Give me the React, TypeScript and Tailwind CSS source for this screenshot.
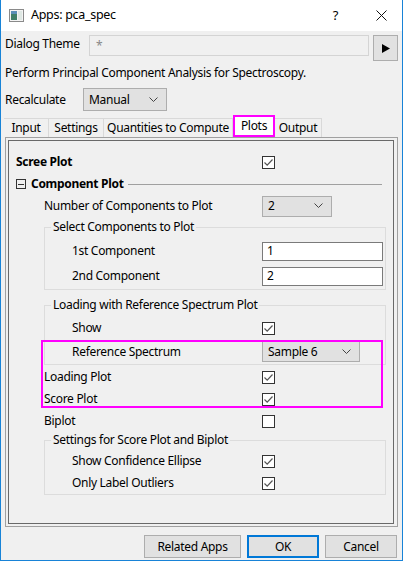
import React from 'react';

const Check: React.FC<{ checked?: boolean }> = ({ checked }) => (
  <span className="flex h-[13px] w-[13px] items-center justify-center border border-[#333] bg-white">
    {checked && (
      <svg width="11" height="11" viewBox="0 0 11 11">
        <path d="M1.5 5.5 L4.2 8.2 L9.5 2.5" fill="none" stroke="#555" strokeWidth="1.2" />
      </svg>
    )}
  </span>
);

const Chevron: React.FC = () => (
  <svg width="9" height="6" viewBox="0 0 9 6">
    <path d="M0.5 0.5 L4.5 4.5 L8.5 0.5" fill="none" stroke="#444" strokeWidth="1" />
  </svg>
);

const Select: React.FC<{ value: string; className: string }> = ({ value, className }) => (
  <div className={`flex items-center justify-between border border-[#adadad] bg-[#e1e1e1] pl-[5px] pr-[8px] ${className}`}>
    <span>{value}</span>
    <Chevron />
  </div>
);

const TextBox: React.FC<{ value: string }> = ({ value }) => (
  <div className="flex h-[19px] w-[121px] items-center border border-[#7a7a7a] bg-white pl-[4px]">{value}</div>
);

// label column ends where controls start (x = 262)
const Row: React.FC<{ label: string; labelClass: string; h?: string; children?: React.ReactNode }> = ({
  label,
  labelClass,
  h = 'h-[22px]',
  children,
}) => (
  <div className={`flex items-center ${h}`}>
    <div className={labelClass}>{label}</div>
    <div className="flex items-center">{children}</div>
  </div>
);

const Group: React.FC<{ title: string; className: string; children: React.ReactNode }> = ({ title, className, children }) => (
  <fieldset className={`ml-[35px] mr-[7px] border border-[#dcdcdc] ${className}`}>
    <legend className="ml-[6px] px-[2px] leading-[16px]">{title}</legend>
    {children}
  </fieldset>
);

const tabs = [
  { name: 'Input', w: 'w-[45px]' },
  { name: 'Settings', w: 'w-[55px]' },
  { name: 'Quantities to Compute', w: 'w-[129px]' },
  { name: 'Plots', w: 'w-[42px]', active: true },
  { name: 'Output', w: 'w-[47px]' },
];

const App: React.FC = () => {
  return (
    <div className="flex h-[561px] w-[403px] flex-col border-x border-b border-[#1883d7] bg-[#f0f0f0] font-['Noto_Sans',sans-serif] text-[12px] tracking-[-0.3px] whitespace-nowrap text-black">
      {/* title bar */}
      <div className="flex h-[31px] items-center bg-white">
        <svg className="ml-[8px]" width="15" height="13" viewBox="0 0 15 13">
          <rect x="0.5" y="0.5" width="14" height="12" fill="#f4f4f4" stroke="#8a8a8a" />
          <rect x="2" y="2" width="6" height="9" fill="#3f7f68" />
          <rect x="2" y="2" width="6" height="3" fill="#5a8fb8" />
          <rect x="9" y="2" width="4" height="9" fill="#dfe8e4" />
        </svg>
        <span className="ml-[7px] text-[12.5px]">Apps: pca_spec</span>
        <span className="ml-auto mr-[38px] text-[13px]">?</span>
        <svg className="mr-[15px]" width="11" height="11" viewBox="0 0 11 11">
          <path d="M0.5 0.5 L10.5 10.5 M10.5 0.5 L0.5 10.5" stroke="#111" strokeWidth="1" />
        </svg>
      </div>

      {/* dialog theme */}
      <div className="mt-[4px] flex items-start pl-[4px]">
        <span className="mt-[1px] w-[84px] leading-[16px]">Dialog Theme</span>
        <div className="flex h-[21px] w-[280px] items-center border border-[#d4d4d4] bg-[#f0f0f0] pl-[6px] text-[#888]">*</div>
        <div className="ml-[4px] flex h-[26px] w-[25px] items-center justify-center border border-[#adadad] bg-[#e1e1e1]">
          <svg width="8" height="9" viewBox="0 0 8 9">
            <path d="M0 0 L8 4.5 L0 9 Z" fill="#000" />
          </svg>
        </div>
      </div>

      <div className="mt-[4px] pl-[4px] leading-[16px]">Perform Principal Component Analysis for Spectroscopy.</div>

      <div className="mt-[7px] flex items-center pl-[4px]">
        <span className="w-[78px]">Recalculate</span>
        <Select value="Manual" className="h-[23px] w-[84px]" />
      </div>

      {/* tabs */}
      <div className="mt-[4px] flex h-[22px] items-end pl-[3px]">
        {tabs.map((t) =>
          t.active ? (
            <div
              key={t.name}
              className={`flex h-[22px] items-center justify-center border-2 border-[#ff00ff] bg-white ${t.w}`}
            >
              {t.name}
            </div>
          ) : (
            <div
              key={t.name}
              className={`flex h-[19px] items-center justify-center border-t border-r border-[#d9d9d9] ${t.w}`}
            >
              {t.name}
            </div>
          ),
        )}
      </div>

      {/* panel */}
      <div className="ml-[4px] w-[393px] border border-[#a0a0a0] p-[2px] pr-[3px]">
        <div className="relative flex h-[384px] flex-col border border-[#696969] pt-[10px]">
          <Row label="Scree Plot" labelClass="w-[253px] pl-[7px] font-bold">
            <Check checked />
          </Row>
          <div className="flex h-[22px] items-center pl-[7px]">
            <span className="flex h-[10px] w-[10px] items-center justify-center border border-[#333]">
              <span className="h-[1px] w-[6px] bg-[#333]" />
            </span>
            <span className="ml-[5px] font-bold">Component Plot</span>
            <span className="ml-[4px] mr-[11px] h-[1px] flex-1 bg-[#a0a0a0]" />
          </div>
          <Row label="Number of Components to Plot" labelClass="w-[253px] pl-[35px]">
            <Select value="2" className="h-[21px] w-[70px]" />
          </Row>

          <Group title="Select Components to Plot" className="mt-[2px] pt-[4px]">
            <Row label="1st Component" labelClass="w-[217px] pl-[27px]" h="h-[24px]">
              <TextBox value="1" />
            </Row>
            <Row label="2nd Component" labelClass="w-[217px] pl-[27px]" h="h-[26px]">
              <TextBox value="2" />
            </Row>
          </Group>

          <Group title="Loading with Reference Spectrum Plot" className="mt-[7px] pt-[4px]">
            <Row label="Show" labelClass="w-[217px] pl-[27px]">
              <Check checked />
            </Row>
            <Row label="Reference Spectrum" labelClass="w-[217px] pl-[27px]" h="h-[25px]">
              <Select value="Sample 6" className="h-[21px] w-[98px]" />
            </Row>
          </Group>

          <div className="mt-[1px]">
            <Row label="Loading Plot" labelClass="w-[253px] pl-[35px]">
              <Check checked />
            </Row>
            <Row label="Score Plot" labelClass="w-[253px] pl-[35px]">
              <Check checked />
            </Row>
            <Row label="Biplot" labelClass="w-[253px] pl-[35px]">
              <Check />
            </Row>
          </div>

          <Group title="Settings for Score Plot and Biplot" className="pt-[2px]">
            <Row label="Show Confidence Ellipse" labelClass="w-[217px] pl-[27px]">
              <Check checked />
            </Row>
            <Row label="Only Label Outliers" labelClass="w-[217px] pl-[27px]">
              <Check checked />
            </Row>
          </Group>

          {/* highlight annotation */}
          <div className="pointer-events-none absolute left-[32px] top-[199px] h-[68px] w-[342px] border-2 border-[#ff00ff]" />
        </div>
      </div>

      {/* buttons */}
      <div className="mt-[8px] flex justify-end gap-[6px] pr-[5px]">
        <button className="h-[23px] w-[97px] border border-[#adadad] bg-[#e1e1e1]">Related Apps</button>
        <button className="h-[23px] w-[72px] border-2 border-[#0078d7] bg-[#e1e1e1]">OK</button>
        <button className="h-[23px] w-[72px] border border-[#adadad] bg-[#e1e1e1]">Cancel</button>
      </div>
    </div>
  );
};

export default App;
